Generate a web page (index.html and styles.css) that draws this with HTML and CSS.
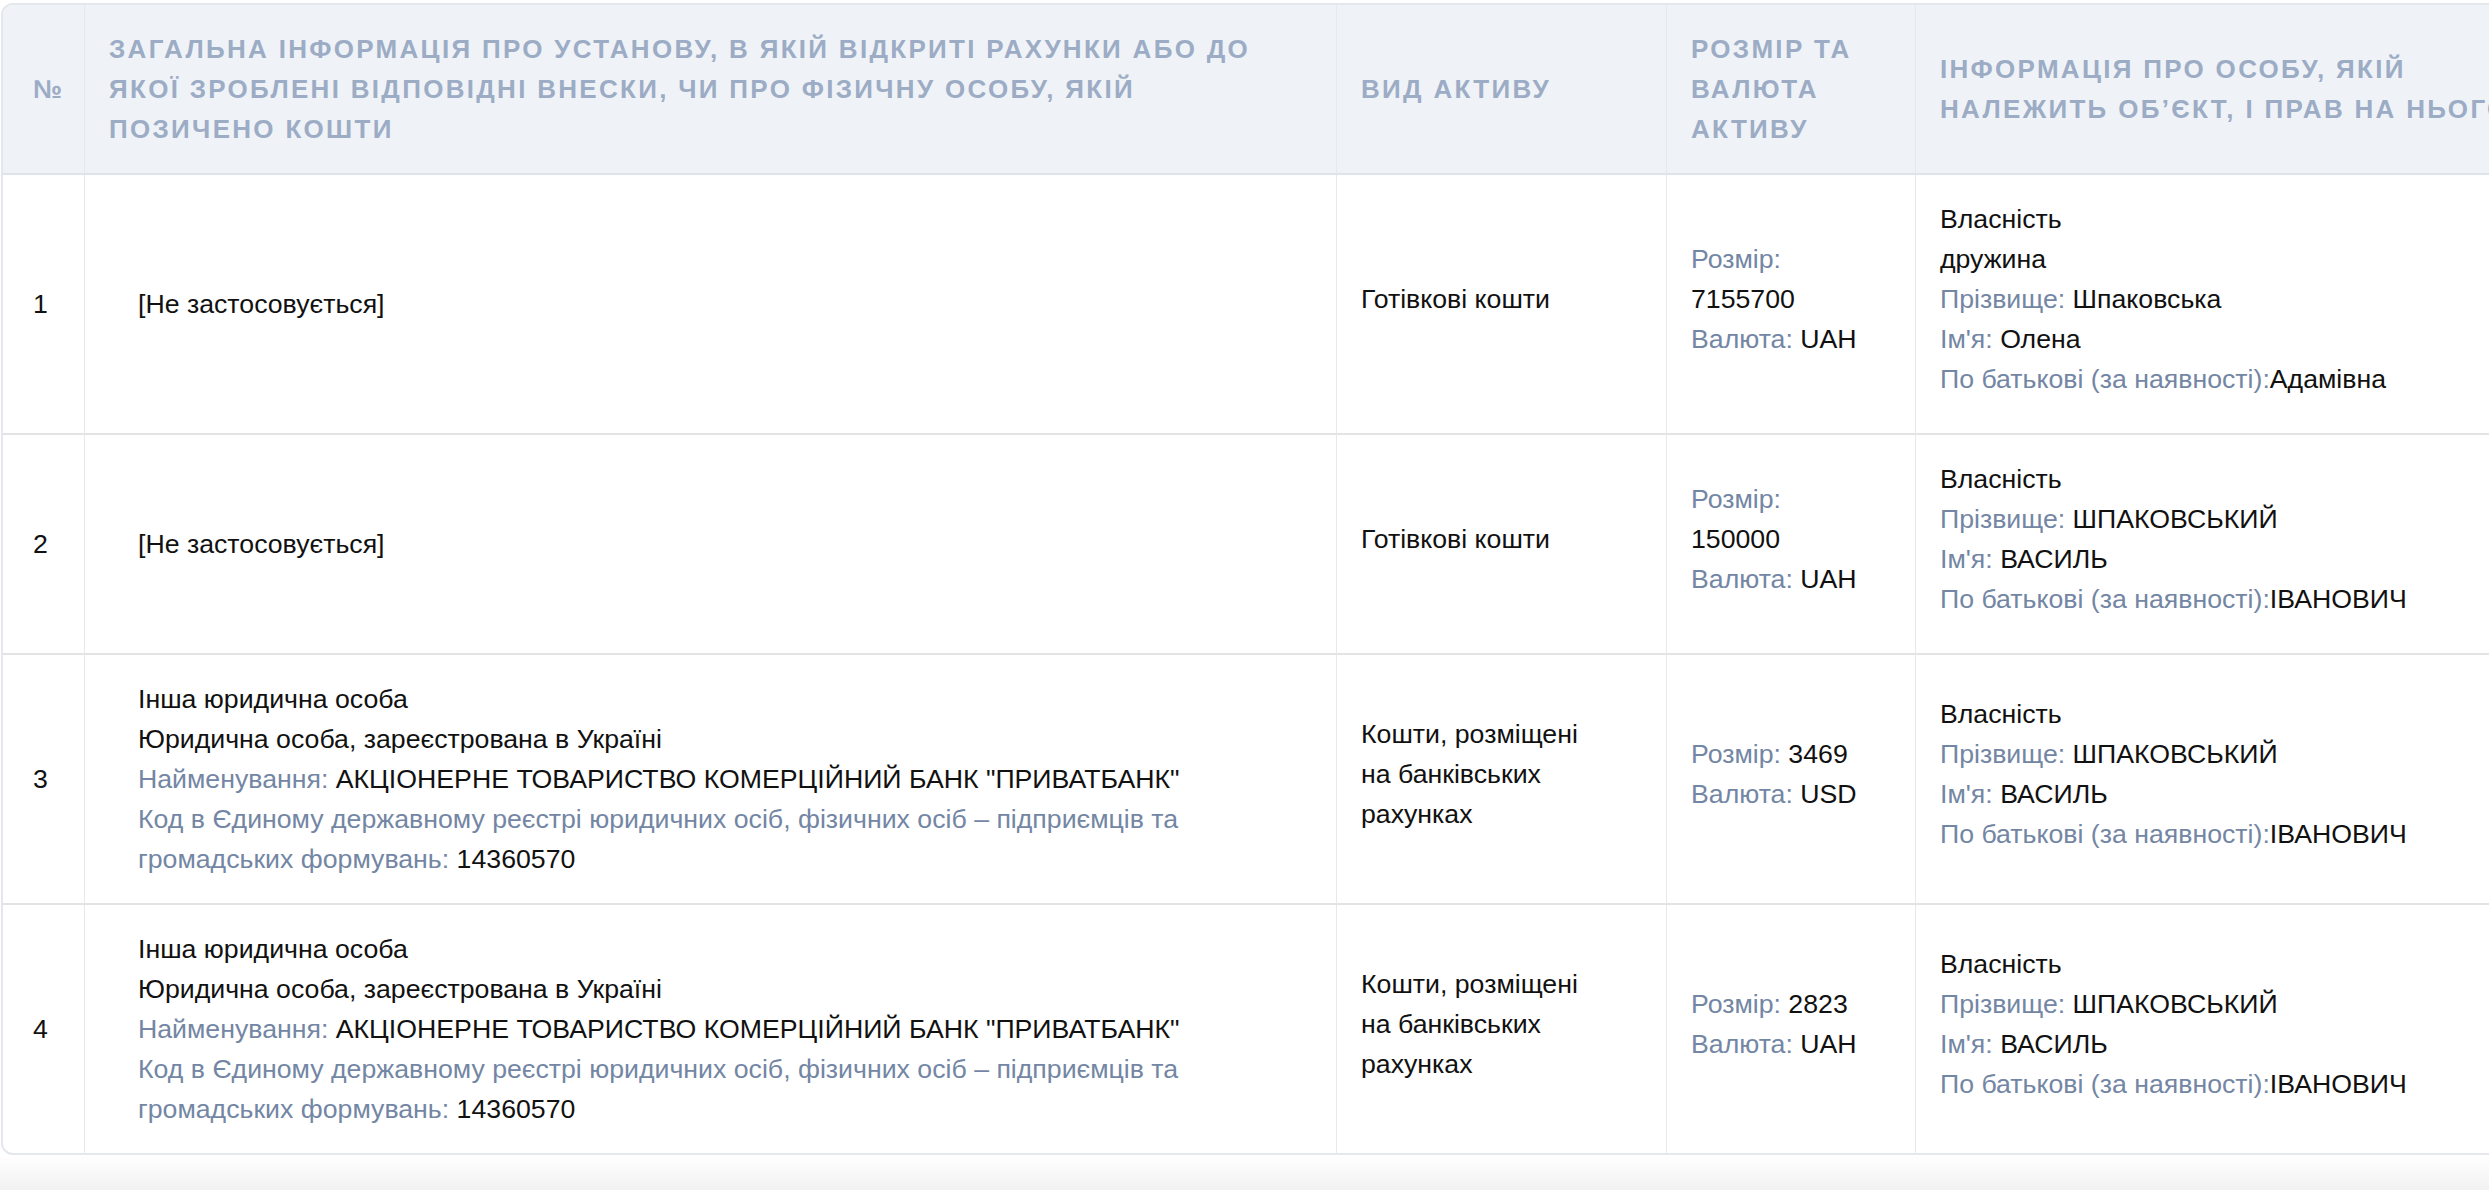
FILE: index.html
```html
<!DOCTYPE html>
<html lang="uk">
<head>
<meta charset="utf-8">
<title>Активи</title>
<link rel="stylesheet" href="styles.css">
</head>
<body>
<div class="page">
  <div class="scroller">
    <table class="assets">
      <thead>
        <tr>
          <th class="c-num">№</th>
          <th class="c-inst">Загальна інформація про установу, в якій відкриті рахунки або до якої зроблені відповідні внески, чи про фізичну особу, якій позичено кошти</th>
          <th class="c-type">Вид активу</th>
          <th class="c-size">Розмір та валюта активу</th>
          <th class="c-owner">Інформація про особу, якій належить об’єкт, і прав на нього</th>
          <th class="c-extra">Дата набуття</th>
        </tr>
      </thead>
      <tbody>
        <tr>
          <td class="c-num">1</td>
          <td class="c-inst"><div class="inst">[Не застосовується]</div></td>
          <td class="c-type"><div class="type">Готівкові кошти</div></td>
          <td class="c-size"><div class="size"><span class="lbl">Розмір:</span> 7155700<br><span class="lbl">Валюта:</span> UAH</div></td>
          <td class="c-owner"><div class="owner">
            <div>Власність</div>
            <div>дружина</div>
            <div><span class="lbl">Прізвище:</span> Шпаковська</div>
            <div><span class="lbl">Ім'я:</span> Олена</div>
            <div><span class="lbl">По батькові (за наявності):</span>Адамівна</div>
          </div></td>
          <td class="c-extra"></td>
        </tr>
        <tr>
          <td class="c-num">2</td>
          <td class="c-inst"><div class="inst">[Не застосовується]</div></td>
          <td class="c-type"><div class="type">Готівкові кошти</div></td>
          <td class="c-size"><div class="size"><span class="lbl">Розмір:</span> 150000<br><span class="lbl">Валюта:</span> UAH</div></td>
          <td class="c-owner"><div class="owner">
            <div>Власність</div>
            <div><span class="lbl">Прізвище:</span> ШПАКОВСЬКИЙ</div>
            <div><span class="lbl">Ім'я:</span> ВАСИЛЬ</div>
            <div><span class="lbl">По батькові (за наявності):</span>ІВАНОВИЧ</div>
          </div></td>
          <td class="c-extra"></td>
        </tr>
        <tr>
          <td class="c-num">3</td>
          <td class="c-inst"><div class="inst">
            <div>Інша юридична особа</div>
            <div>Юридична особа, зареєстрована в Україні</div>
            <div><span class="lbl">Найменування:</span> АКЦІОНЕРНЕ ТОВАРИСТВО КОМЕРЦІЙНИЙ БАНК "ПРИВАТБАНК"</div>
            <div><span class="lbl">Код в Єдиному державному реєстрі юридичних осіб, фізичних осіб – підприємців та громадських формувань:</span> 14360570</div>
          </div></td>
          <td class="c-type"><div class="type">Кошти, розміщені на банківських рахунках</div></td>
          <td class="c-size"><div class="size"><span class="lbl">Розмір:</span> 3469<br><span class="lbl">Валюта:</span> USD</div></td>
          <td class="c-owner"><div class="owner">
            <div>Власність</div>
            <div><span class="lbl">Прізвище:</span> ШПАКОВСЬКИЙ</div>
            <div><span class="lbl">Ім'я:</span> ВАСИЛЬ</div>
            <div><span class="lbl">По батькові (за наявності):</span>ІВАНОВИЧ</div>
          </div></td>
          <td class="c-extra"></td>
        </tr>
        <tr>
          <td class="c-num">4</td>
          <td class="c-inst"><div class="inst">
            <div>Інша юридична особа</div>
            <div>Юридична особа, зареєстрована в Україні</div>
            <div><span class="lbl">Найменування:</span> АКЦІОНЕРНЕ ТОВАРИСТВО КОМЕРЦІЙНИЙ БАНК "ПРИВАТБАНК"</div>
            <div><span class="lbl">Код в Єдиному державному реєстрі юридичних осіб, фізичних осіб – підприємців та громадських формувань:</span> 14360570</div>
          </div></td>
          <td class="c-type"><div class="type">Кошти, розміщені на банківських рахунках</div></td>
          <td class="c-size"><div class="size"><span class="lbl">Розмір:</span> 2823<br><span class="lbl">Валюта:</span> UAH</div></td>
          <td class="c-owner"><div class="owner">
            <div>Власність</div>
            <div><span class="lbl">Прізвище:</span> ШПАКОВСЬКИЙ</div>
            <div><span class="lbl">Ім'я:</span> ВАСИЛЬ</div>
            <div><span class="lbl">По батькові (за наявності):</span>ІВАНОВИЧ</div>
          </div></td>
          <td class="c-extra"></td>
        </tr>
      </tbody>
    </table>
  </div>
  <div class="fade"></div>
</div>
</body>
</html>
```
FILE: styles.css
```css
html, body {
  margin: 0;
  padding: 0;
  background: #ffffff;
}
body {
  font-family: "Liberation Sans", Arial, Helvetica, sans-serif;
  font-size: 26.7px;
  line-height: 40px;
  color: #111111;
  overflow: hidden;
}
.page {
  width: 100%;
  overflow: hidden;
}
.scroller {
  padding: 3px 0 0 1px;
  overflow: hidden;
}
.assets {
  table-layout: fixed;
  width: 2960px;
  border-collapse: separate;
  border-spacing: 0;
  border: 2px solid #e4e7eb;
  border-radius: 12px;
  overflow: hidden;
}
.assets th,
.assets td {
  box-sizing: border-box;
  padding: 24px;
  vertical-align: middle;
  text-align: left;
  border-right: 1px solid #e5e8ec;
  border-bottom: 2px solid #e3e3e3;
}
.assets th:last-child,
.assets td:last-child {
  border-right: none;
}
.assets tbody tr:last-child td {
  border-bottom: none;
}
.assets th {
  background: #eff3f8;
  color: #9dacc5;
  font-weight: bold;
  font-size: 26px;
  letter-spacing: 2.3px;
  text-transform: uppercase;
  border-bottom: 2px solid #dde4ea;
}
.assets th.c-inst {
  padding-right: 52px;
}
.c-num { width: 82px; padding-left: 30px !important; padding-right: 10px !important; }
.c-inst { width: 1252px; }
.c-type { width: 330px; }
.c-size { width: 249px; }
.c-owner { width: 650px; }
.c-extra { width: 397px; }
.inst {
  margin-left: 29px;
}
.type {
  max-width: 235px;
  margin-bottom: 10px;
}
.size {
  max-width: 175px;
  margin-bottom: 10px;
}
.owner {
  margin-bottom: 10px;
}
.lbl {
  color: #7386a4;
}
.fade {
  height: 40px;
  background: linear-gradient(to bottom, #ffffff 0%, #f6f6f6 60%, #efefef 100%);
}
```
